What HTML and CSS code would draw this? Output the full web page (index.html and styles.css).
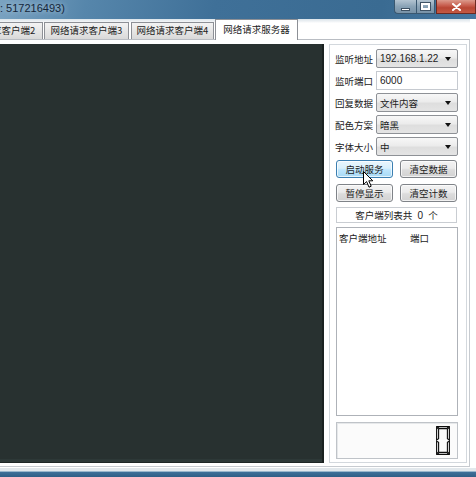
FILE: index.html
```html
<!DOCTYPE html>
<html>
<head>
<meta charset="utf-8">
<link rel="stylesheet" href="styles.css">
</head>
<body>
<div class="window">
  <div class="titlebar">
    <span class="title">: 517216493)</span>
    <div class="caption">
      <span class="cbtn min"><span class="min-glyph"></span></span>
      <span class="cbtn max"><span class="max-glyph"></span></span>
      <span class="cbtn close"><svg width="11" height="8" viewBox="0 0 11 8"><path d="M2 1 L9 7 M9 1 L2 7" stroke="#fff" stroke-width="2" stroke-linecap="round"/></svg></span>
    </div>
  </div>
  <div class="client">
    <div class="tabs">
      <div class="tab first">网络请求客户端2</div>
      <div class="tab second">网络请求客户端3</div>
      <div class="tab third">网络请求客户端4</div>
      <div class="tab active">网络请求服务器</div>
    </div>
    <div class="page">
      <div class="console"></div>
      <div class="side">
        <div class="form">
          <span class="lbl">监听地址</span>
          <div class="select"><span class="val num">192.168.1.22</span><span class="arrow"></span></div>
          <span class="lbl">监听端口</span>
          <div class="input"><span class="val num">6000</span></div>
          <span class="lbl">回复数据</span>
          <div class="select"><span class="val">文件内容</span><span class="arrow"></span></div>
          <span class="lbl">配色方案</span>
          <div class="select"><span class="val">暗黑</span><span class="arrow"></span></div>
          <span class="lbl">字体大小</span>
          <div class="select"><span class="val">中</span><span class="arrow"></span></div>
        </div>
        <div class="btns">
          <button class="btn hover">启动服务</button>
          <button class="btn">清空数据</button>
          <button class="btn">暂停显示</button>
          <button class="btn">清空计数</button>
        </div>
        <div class="count">客户端列表共 <span class="num">0</span> 个</div>
        <div class="list">
          <div class="list-head"><span class="col-addr">客户端地址</span><span class="col-port">端口</span></div>
        </div>
        <div class="lcd">
          <svg width="14" height="29" viewBox="0 0 14 29">
            <g fill="#f6f6f6" stroke="#0d0d0d" stroke-width="1.1" stroke-linejoin="miter">
              <path d="M1.2 0.6 H12.8 L10.9 2.6 H3.1 Z"/>
              <path d="M0.6 1.2 L2.6 3.2 V12.6 L0.6 13.9 Z"/>
              <path d="M13.4 1.2 V13.9 L11.4 12.6 V3.2 Z"/>
              <path d="M0.6 15.1 L2.6 16.4 V25.8 L0.6 27.8 Z"/>
              <path d="M13.4 15.1 V27.8 L11.4 25.8 V16.4 Z"/>
              <path d="M1.2 28.4 L3.1 26.4 H10.9 L12.8 28.4 Z"/>
            </g>
          </svg>
        </div>
        <svg class="cursor" width="12" height="18" viewBox="0 0 12 18"><path d="M0.5 0.5 V13.5 L3.6 10.6 L6 16.2 L8.2 15.2 L5.8 9.8 H9.8 Z" fill="#fff" stroke="#000" stroke-width="1"/></svg>
      </div>
    </div>
  </div>
  <div class="frame-bottom"></div>
</div>
</body>
</html>
```

FILE: styles.css
```css
* { box-sizing: border-box; margin: 0; padding: 0; }
html, body { width: 476px; height: 477px; overflow: hidden; }
body {
  font-family: "Noto Sans CJK SC", "Liberation Sans", sans-serif;
  font-size: 9.5px;
  color: #1c1c1c;
  background: #3b6c92;
}
.window { display: flex; flex-direction: column; width: 476px; height: 477px; overflow: hidden; }

.titlebar {
  height: 19px;
  display: flex;
  justify-content: space-between;
  align-items: flex-start;
  background: linear-gradient(100deg, #7aa3c1 0%, #5686ab 18%, #3f7098 45%, #3a6b92 80%, #4677a0 100%);
}
.title {
  font-family: "Liberation Sans", sans-serif;
  font-size: 11px;
  line-height: 17px;
  color: #14263a;
  text-shadow: 0 0 5px rgba(220, 235, 245, 0.7);
}
.caption { display: flex; align-items: flex-start; }
.cbtn {
  height: 14px;
  display: flex;
  align-items: center;
  justify-content: center;
  border: 1px solid #3a5870;
  border-top: none;
}
.min, .max { background: linear-gradient(#b3c4d1, #8aa3b6 50%, #7892a7); }
.min { width: 22px; border-radius: 0 0 0 4px; border-right: none; }
.max { width: 19px; }
.min-glyph { width: 9px; height: 3px; background: #fff; border: 1px solid #3e5264; margin-top: 5px; }
.max-glyph { width: 9px; height: 7px; border: 2px solid #fff; outline: 1px solid #3e5264; }
.close {
  width: 40px;
  margin-left: 1px;
  background: linear-gradient(#dc9a8c, #c65a4a 45%, #b84634 60%, #c45a44);
  border-color: #6d2a22;
}

.client { flex: 1; background: #fff; padding: 0 6px 1px 0; display: flex; flex-direction: column; }
.tabs {
  height: 20px;
  display: flex;
  align-items: flex-end;
  background: linear-gradient(#dbe4ea 0, #f4f6f8 3px, #fff 4px);
}
.tab {
  height: 17px;
  width: 84px;
  border: 1px solid #8d9096;
  border-bottom: none;
  background: linear-gradient(#f3f3f3, #e6e6e6 50%, #d9d9d9);
  color: #222;
  display: flex;
  align-items: center;
  justify-content: center;
  line-height: 1;
  white-space: nowrap;
}
.first { margin-left: -44px; width: 87px; }
.second { margin-left: 1px; width: 85px; }
.third { margin-left: 2px; width: 83px; }
.active {
  margin-left: 1px;
  width: 83px;
  height: 21px;
  margin-bottom: -1px;
  background: #fff;
  position: relative;
  z-index: 1;
  padding-bottom: 1px;
}

.page {
  flex: 1;
  display: flex;
  gap: 5px;
  border-top: 1px solid #b9bdc3;
  border-right: 1px solid #c7cbd0;
  border-bottom: 1px solid #c7cbd0;
  padding: 4px 2px 3px 0;
  background: #fff;
}
.console {
  flex: 1;
  background: #283130;
  border-right: 2px solid #1a2120;
  border-bottom: 1px solid #1e2625;
  box-shadow: inset 0 -3px 0 #2d3837;
}
.side {
  width: 138px;
  position: relative;
  display: flex;
  flex-direction: column;
  border: 1px solid #d3d8dd;
  padding: 4px 8px 3px 5px;
  background: #fff;
}
.form {
  display: grid;
  grid-template-columns: 41px 1fr;
  grid-auto-rows: 19px;
  row-gap: 3px;
  align-items: center;
}
.lbl { white-space: nowrap; color: #222; }
.select, .input {
  height: 19px;
  display: flex;
  align-items: center;
  justify-content: space-between;
  padding: 0 6px 0 3px;
}
.select {
  border: 1px solid #8e9196;
  border-radius: 2px;
  background: linear-gradient(#f7f7f7, #ececec 45%, #dedede 55%, #e4e4e4);
}
.input { border: 1px solid #c6cad0; background: #fff; }
.num { font-family: "Liberation Sans", sans-serif; font-size: 10px; }
.arrow {
  width: 0; height: 0;
  border-left: 3px solid transparent;
  border-right: 3px solid transparent;
  border-top: 4px solid #111;
}

.btns {
  display: grid;
  grid-template-columns: 57px 57px;
  grid-auto-rows: 18px;
  column-gap: 7px;
  row-gap: 6px;
  margin: 4px 0 0 1px;
}
.btn {
  font: inherit;
  color: #1c1c1c;
  border: 1px solid #7f8388;
  border-radius: 3px;
  background: linear-gradient(#f3f3f3, #ebebeb 45%, #dcdcdc 55%, #d2d2d2);
  box-shadow: inset 0 0 0 1px rgba(255,255,255,0.7);
}
.btn.hover {
  border-color: #3c7fb1;
  background: linear-gradient(#eaf6fd, #d9f0fc 45%, #bee6fd 55%, #a7d9f5);
}
.count {
  margin: 5px 0 0 1px;
  width: 121px;
  height: 16px;
  border: 1px solid #c9cdd2;
  display: flex;
  align-items: center;
  justify-content: center;
  white-space: pre;
}
.count .num { margin: 0 3px; }
.list {
  flex: 1;
  margin: 4px 0 0 1px;
  border: 1px solid #aeb2b8;
  background: #fff;
}
.list-head { display: flex; padding: 3px 0 0 2px; }
.col-addr { width: 71px; }
.lcd {
  margin: 6px 0 0 1px;
  height: 37px;
  border: 1px solid #bfc3c8;
  box-shadow: inset 1px 1px 0 #e6e8ea;
  display: flex;
  justify-content: flex-end;
  align-items: center;
  padding: 0 7px 0 0;
  background: #fbfbfb;
}
.cursor { position: absolute; left: 33px; top: 126px; }

.frame-bottom {
  height: 9px;
  background: linear-gradient(#e2e8ec 0, #e2e8ec 3px, #9ab7cc 3px, #9ab7cc 4px, #3f7099 4px, #2f5f86 100%);
}
```
